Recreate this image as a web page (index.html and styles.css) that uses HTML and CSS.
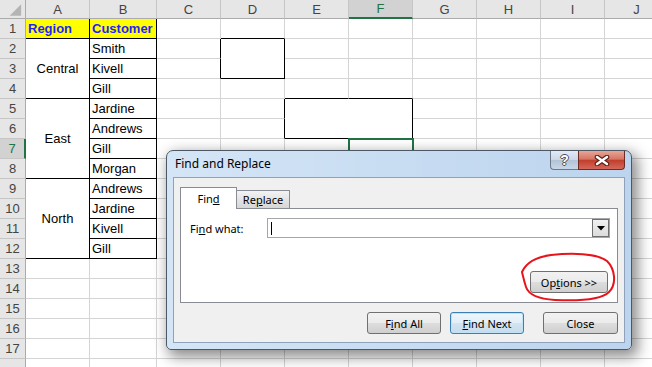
FILE: index.html
```html
<!DOCTYPE html>
<html lang="en">
<head>
  <meta charset="UTF-8">
  <title>Find and Replace</title>
  <link rel="stylesheet" href="styles.css">
</head>
<body>
  <div class="sheet">
    <div class="corner"><svg width="26" height="19" viewBox="0 0 26 19"><polygon points="10,16 22,16 22,4" fill="#b4b4b4"/></svg></div>
    <div class="hd">A</div><div class="hd">B</div><div class="hd">C</div><div class="hd">D</div><div class="hd">E</div><div class="hd on">F</div><div class="hd">G</div><div class="hd">H</div><div class="hd">I</div><div class="hd">J</div>

    <div class="rh">1</div><div class="d title">Region</div><div class="d title">Customer</div><div></div><div class="bk"></div><div></div><div></div><div></div><div></div><div></div><div></div>
    <div class="rh">2</div><div class="d mid rows3">Central</div><div class="d">Smith</div><div class="rk"></div><div class="box rows2"></div><div></div><div></div><div></div><div></div><div></div><div></div>
    <div class="rh">3</div><div class="d">Kivell</div><div class="rk"></div><div></div><div></div><div></div><div></div><div></div><div></div>
    <div class="rh">4</div><div class="d">Gill</div><div></div><div></div><div class="bk"></div><div class="bk"></div><div></div><div></div><div></div><div></div>
    <div class="rh">5</div><div class="d mid rows4">East</div><div class="d">Jardine</div><div></div><div class="rk"></div><div class="box rows2 cols2"></div><div></div><div></div><div></div><div></div>
    <div class="rh">6</div><div class="d">Andrews</div><div></div><div class="rk"></div><div></div><div></div><div></div><div></div>
    <div class="rh on">7</div><div class="d">Gill</div><div></div><div></div><div></div><div class="cur"></div><div></div><div></div><div></div><div></div>
    <div class="rh">8</div><div class="d">Morgan</div><div></div><div></div><div></div><div></div><div></div><div></div><div></div><div></div>
    <div class="rh">9</div><div class="d mid rows4">North</div><div class="d">Andrews</div><div></div><div></div><div></div><div></div><div></div><div></div><div></div><div></div>
    <div class="rh">10</div><div class="d">Jardine</div><div></div><div></div><div></div><div></div><div></div><div></div><div></div><div></div>
    <div class="rh">11</div><div class="d">Kivell</div><div></div><div></div><div></div><div></div><div></div><div></div><div></div><div></div>
    <div class="rh">12</div><div class="d">Gill</div><div></div><div></div><div></div><div></div><div></div><div></div><div></div><div></div>
    <div class="rh">13</div><div></div><div></div><div></div><div></div><div></div><div></div><div></div><div></div><div></div><div></div>
    <div class="rh">14</div><div></div><div></div><div></div><div></div><div></div><div></div><div></div><div></div><div></div><div></div>
    <div class="rh">15</div><div></div><div></div><div></div><div></div><div></div><div></div><div></div><div></div><div></div><div></div>
    <div class="rh">16</div><div></div><div></div><div></div><div></div><div></div><div></div><div></div><div></div><div></div><div></div>
    <div class="rh">17</div><div></div><div></div><div></div><div></div><div></div><div></div><div></div><div></div><div></div><div></div>
    <div class="rh"></div><div></div><div></div><div></div><div></div><div></div><div></div><div></div><div></div><div></div><div></div>
  </div>

  <div class="dialog">
    <div class="titlebar">
      <div class="caption">Find and Replace</div>
      <div class="capbtns">
        <div class="help">?</div>
        <div class="close">
          <svg width="16" height="11" viewBox="0 0 16 11">
            <path d="M3 2 L13 9 M13 2 L3 9" stroke="#5a2119" stroke-width="4.6" stroke-linecap="round" fill="none"/>
            <path d="M3 2 L13 9 M13 2 L3 9" stroke="#ffffff" stroke-width="2.4" stroke-linecap="round" fill="none"/>
          </svg>
        </div>
      </div>
    </div>
    <div class="client">
      <div class="tabs">
        <div class="tab active">Fin<u>d</u></div>
        <div class="tab">Re<u>p</u>lace</div>
      </div>
      <div class="page">
        <div class="field">
          <label>Fi<u>n</u>d what:</label>
          <div class="input">
            <span class="caret"></span>
            <span class="drop"><svg width="8" height="5" viewBox="0 0 8 5"><polygon points="0,0 8,0 4,4.5" fill="#000"/></svg></span>
          </div>
        </div>
        <button class="btn options">Op<u>t</u>ions &gt;&gt;</button>
      </div>
      <div class="actions">
        <button class="btn">F<u>i</u>nd All</button>
        <button class="btn default"><u>F</u>ind Next</button>
        <button class="btn">Close</button>
      </div>
    </div>
  </div>

  <svg class="scribble" width="110" height="56" viewBox="0 0 110 56">
    <path d="M7 22 C11 13 21 7 36 5 C56 3 82 3 92 11 C100 19 102 34 94 42 C86 50 62 51 40 50 C25 49 14 46 11 37 C9 31 8 26 7 22" stroke="#e8141c" stroke-width="2" fill="none" stroke-linecap="round"/>
  </svg>
</body>
</html>
```

FILE: styles.css
```css
html, body {
  margin: 0;
  padding: 0;
}

body {
  position: relative;
  width: 652px;
  height: 367px;
  overflow: hidden;
  background: #fff;
  font-family: "Liberation Sans", Arial, sans-serif;
  font-size: 13px;
  color: #000;
}

/* spreadsheet */

.sheet {
  display: grid;
  grid-template-columns: 26px 64px 67px repeat(8, 64px);
  grid-template-rows: 19px;
  grid-auto-rows: 20px;
}

.sheet > div {
  box-sizing: border-box;
  border-right: 1px solid #d4d4d4;
  border-bottom: 1px solid #d4d4d4;
  display: flex;
  align-items: center;
  padding: 0 2px;
  white-space: nowrap;
  overflow: hidden;
}

.sheet > .corner {
  background: #e6e6e6;
  padding: 0;
  border-right-color: #ababab;
  border-bottom-color: #ababab;
}

.sheet > .hd {
  background: #e6e6e6;
  color: #444;
  justify-content: center;
  border-right-color: #c6c6c6;
  border-bottom-color: #ababab;
}

.sheet > .hd.on {
  background: #d2d2d2;
  color: #217346;
  border-bottom: 2px solid #217346;
}

.sheet > .rh {
  background: #e6e6e6;
  color: #444;
  justify-content: center;
  border-right-color: #ababab;
  border-bottom-color: #c6c6c6;
}

.sheet > .rh.on {
  background: #d2d2d2;
  color: #217346;
  border-right: 2px solid #217346;
}

.sheet > .d {
  border-right-color: #000;
  border-bottom-color: #000;
}

.sheet > .title {
  background: #ffff00;
  color: #1f1fff;
  font-weight: bold;
}

.sheet > .mid {
  justify-content: center;
}

.sheet > .rk {
  border-right-color: #000;
}

.sheet > .bk {
  border-bottom-color: #000;
}

.sheet > .box {
  border-right-color: #000;
  border-bottom-color: #000;
}

.rows2 { grid-row: span 2; }
.rows3 { grid-row: span 3; }
.rows4 { grid-row: span 4; }
.cols2 { grid-column: span 2; }

.sheet > .cur {
  outline: 2px solid #217346;
  outline-offset: -1px;
}

/* dialog */

.dialog {
  position: absolute;
  left: 166px;
  top: 150px;
  width: 466px;
  height: 200px;
  box-sizing: border-box;
  border: 1px solid #4d5866;
  border-radius: 7px 7px 5px 5px;
  background: linear-gradient(90deg, #d4e5f6, #bcd4ee);
  box-shadow: 4px 5px 14px 2px rgba(0, 0, 0, 0.45);
  font-family: "Noto Sans", "Open Sans", sans-serif;
  font-size: 11px;
  display: flex;
  flex-direction: column;
}

.titlebar {
  height: 26px;
  display: flex;
  align-items: flex-start;
  padding-left: 8px;
}

.caption {
  flex: 1;
  line-height: 26px;
  font-size: 12px;
  color: #000;
}

.capbtns {
  display: flex;
  margin-right: 6px;
}

.help {
  width: 28px;
  height: 19px;
  box-sizing: border-box;
  border: 1px solid #6b7889;
  border-top: none;
  border-right: none;
  border-radius: 0 0 0 4px;
  background: linear-gradient(#e2ebf5, #cbd8e7 48%, #b3c4d8 52%, #c9d7e7);
  color: #fff;
  font-family: "Liberation Sans", Arial, sans-serif;
  font-weight: bold;
  font-size: 14px;
  line-height: 18px;
  text-align: center;
  text-shadow: 1px 0 0 #4a4f57, -1px 0 0 #4a4f57, 0 1px 0 #4a4f57, 0 -1px 0 #4a4f57;
}

.close {
  width: 47px;
  height: 19px;
  box-sizing: border-box;
  border: 1px solid #6e2b22;
  border-top: none;
  border-radius: 0 0 4px 0;
  background: linear-gradient(#e8a596, #d77564 45%, #c13f2d 52%, #d5675a);
  display: flex;
  align-items: center;
  justify-content: center;
}

.client {
  flex: 1;
  margin: 0 6px 6px 6px;
  border: 1px solid #8ea3bb;
  background: #f0f0f0;
  padding: 9px 6px 0 6px;
  display: flex;
  flex-direction: column;
}

.tabs {
  display: flex;
  align-items: flex-end;
  height: 22px;
  margin-bottom: -1px;
  position: relative;
  z-index: 1;
}

.tab {
  box-sizing: border-box;
  height: 19px;
  width: 53px;
  border: 1px solid #898c95;
  border-left: none;
  background: linear-gradient(#f3f3f3, #e4e4e4 50%, #d6d6d6);
  text-align: center;
  line-height: 18px;
}

.tab.active {
  width: 57px;
  height: 22px;
  border-left: 1px solid #898c95;
  border-bottom: none;
  background: #fff;
  line-height: 22px;
}

.page {
  height: 95px;
  box-sizing: border-box;
  background: #fff;
  border: 1px solid #898c95;
  padding: 9px 7px 9px 9px;
  display: flex;
  flex-direction: column;
  justify-content: space-between;
}

.field {
  display: flex;
  align-items: center;
}

.field label {
  width: 77px;
}

.input {
  width: 343px;
  height: 20px;
  box-sizing: border-box;
  border: 1px solid #a6a6a6;
  background: #fff;
  display: flex;
  align-items: center;
  justify-content: space-between;
  padding: 0 0 0 3px;
}

.caret {
  width: 1px;
  height: 13px;
  background: #000;
}

.drop {
  width: 17px;
  height: 18px;
  box-sizing: border-box;
  border: 1px solid #707070;
  background: linear-gradient(#f0f0f0, #dcdcdc);
  display: flex;
  align-items: center;
  justify-content: center;
}

.btn {
  height: 22px;
  width: 74px;
  box-sizing: border-box;
  border: 1px solid #707070;
  border-radius: 3px;
  background: linear-gradient(#f2f2f2, #ebebeb 48%, #dddddd 52%, #cfcfcf);
  font-family: inherit;
  font-size: 11px;
  color: #000;
  padding: 0;
}

.options {
  align-self: flex-end;
  width: 78px;
  margin-right: 2px;
}

.actions {
  display: flex;
  justify-content: flex-end;
  margin-top: 9px;
}

.actions .btn + .btn {
  margin-left: 9px;
}

.actions .default {
  border-color: #3c7fb1;
  box-shadow: inset 0 0 0 1px #bfe3f8;
  background: linear-gradient(#eef6fc, #e3eef7 48%, #d3e4f1 52%, #c6dbec);
  margin-right: 10px;
}

.actions .btn:last-child {
  width: 75px;
}

.scribble {
  position: absolute;
  left: 515px;
  top: 250px;
}
```
